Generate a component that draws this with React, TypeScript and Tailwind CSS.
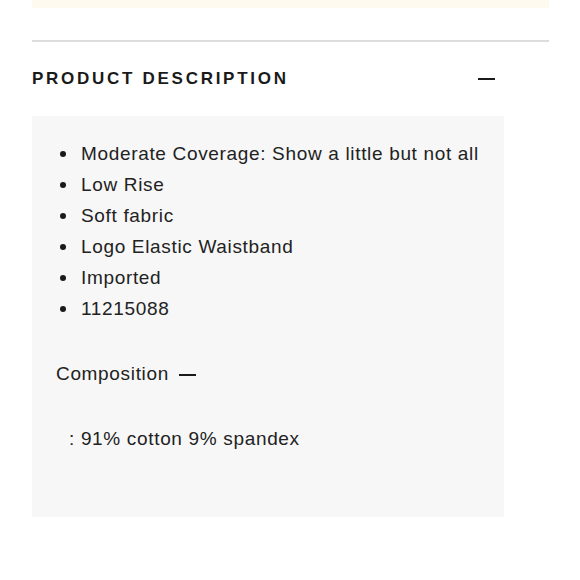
// Product description accordion (expanded)
const features = [
  'Moderate Coverage: Show a little but not all',
  'Low Rise',
  'Soft fabric',
  'Logo Elastic Waistband',
  'Imported',
  '11215088',
]

function Minus({ className }: { className?: string }) {
  return <span className={`block h-[2px] bg-[#1a1a1a] ${className ?? ''}`} />
}

export default function App() {
  return (
    <div className="w-[580px] h-[580px] bg-white font-['Liberation_Sans',sans-serif] text-[#222]">
      <div className="mx-[32px] w-[517px]">
        <div className="h-[8px] bg-[#fffaf0]" />
        <div className="mt-[32px] h-[1.5px] bg-[#dcdcdc]" />

        {/* Header */}
        <div className="flex items-center h-[74px] pr-[54px]">
          <h2 className="flex-1 text-[17px] font-bold tracking-[0.16em] text-[#1a1a1a]">
            PRODUCT DESCRIPTION
          </h2>
          <Minus className="w-[17px]" />
        </div>

        {/* Panel */}
        <div className="w-[472px] h-[401px] bg-[#f7f7f7] pt-[23px]">
          <ul className="pl-[24px]">
            {features.map((f) => (
              <li key={f} className="flex items-center h-[31px] text-[19px] tracking-[0.035em]">
                <span className="w-[6px] h-[6px] rounded-full bg-[#1a1a1a] ml-[4px] mr-[15px]" />
                {f}
              </li>
            ))}
          </ul>

          <div className="flex items-center gap-[10px] pl-[24px] mt-[36px] h-[28px] text-[19px] tracking-[0.035em]">
            Composition
            <Minus className="w-[17px]" />
          </div>

          <div className="pl-[37px] mt-[36px] text-[19px] tracking-[0.035em]">
            : 91% cotton 9% spandex
          </div>
        </div>
      </div>
    </div>
  )
}
